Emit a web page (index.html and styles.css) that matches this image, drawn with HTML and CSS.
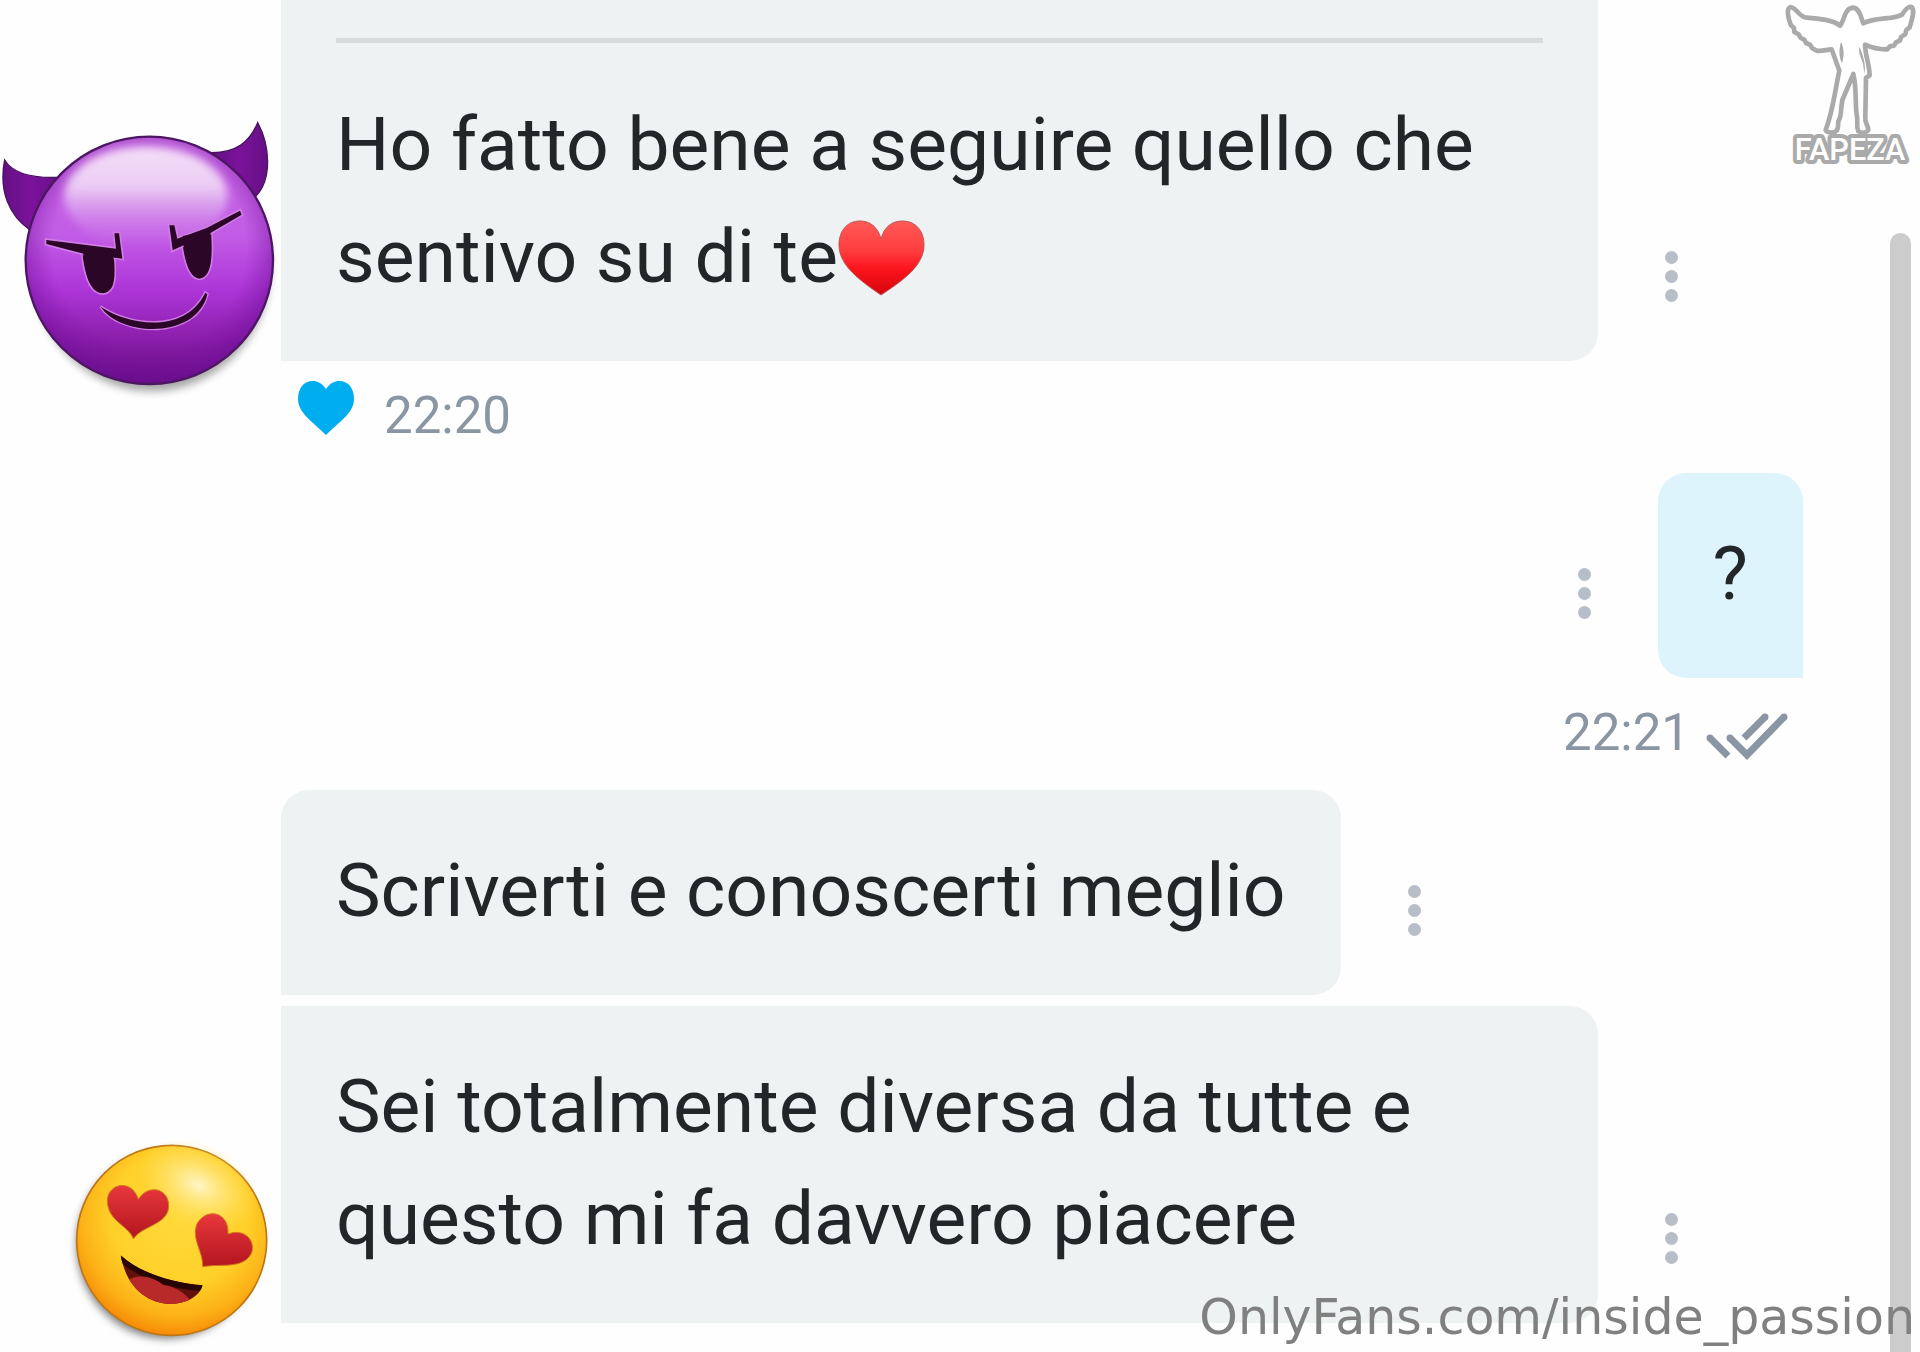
FILE: index.html
```html
<!DOCTYPE html>
<html lang="it">
<head>
    <meta charset="UTF-8">
    <meta name="viewport" content="width=device-width, initial-scale=1.0">
    <title>Chat</title>
    <link rel="stylesheet" href="styles.css">
</head>
<body>
    <main class="chat">
        <section class="group">
            <div class="avatar">
                <svg class="devil" viewBox="0 0 870 870" aria-label="Diavoletto">
                    <defs>
                        <linearGradient id="purple" x1="0" y1="0" x2="0" y2="1">
                            <stop offset="0" stop-color="#c468e0"/>
                            <stop offset="0.4" stop-color="#c25ce6"/>
                            <stop offset="0.62" stop-color="#ad35d8"/>
                            <stop offset="0.82" stop-color="#8b1eaa"/>
                            <stop offset="1" stop-color="#650c80"/>
                        </linearGradient>
                        <radialGradient id="purple-edge" cx="0.5" cy="0.45" r="0.56">
                            <stop offset="0.7" stop-color="#7d16a4" stop-opacity="0"/>
                            <stop offset="1" stop-color="#6c0c94" stop-opacity="0.7"/>
                        </radialGradient>
                        <linearGradient id="purple-shine" x1="0" y1="0" x2="0" y2="1">
                            <stop offset="0" stop-color="#f4e0f8"/>
                            <stop offset="0.4" stop-color="#f0d8f6" stop-opacity="0.9"/>
                            <stop offset="1" stop-color="#d68bed" stop-opacity="0"/>
                        </linearGradient>
                        <linearGradient id="horn" x1="0" y1="0" x2="1" y2="0">
                            <stop offset="0" stop-color="#641083"/>
                            <stop offset="0.5" stop-color="#7c129c"/>
                            <stop offset="1" stop-color="#641083"/>
                        </linearGradient>
                        <filter id="soft" x="-20%" y="-20%" width="140%" height="140%">
                            <feGaussianBlur stdDeviation="12"/>
                        </filter>
                    </defs>
                    <ellipse cx="455" cy="474" rx="355" ry="370" fill="#000" opacity="0.35" filter="url(#soft)"/>
                    <path d="M14 150C40 195 105 205 180 202L88 358C30 318-5 245 14 150Z" fill="url(#horn)" stroke="#4a1260" stroke-width="4"/>
                    <path d="M773 38C748 98 708 128 635 128L768 258C815 210 812 110 773 38Z" fill="url(#horn)" stroke="#4a1260" stroke-width="4"/>
                    <circle cx="448" cy="451" r="371" fill="url(#purple)"/>
                    <circle cx="448" cy="451" r="371" fill="url(#purple-edge)"/>
                    <ellipse cx="438" cy="260" rx="245" ry="150" fill="url(#purple-shine)" filter="url(#soft)"/>
                    <circle cx="448" cy="451" r="371" fill="none" stroke="#4d1663" stroke-width="7"/>
                    <g fill="#2b0626" stroke="#d07de6" stroke-width="10" paint-order="stroke">
                        <path d="M247 425C253 490 270 550 309 550C348 546 346 495 341 432Z"/>
                        <path d="M545 385C553 445 565 505 599 506C636 500 638 440 633 364Z"/>
                        <path d="M139 390L348 416L343 370L357 370L367 446L245 430L139 402Z"/>
                        <path d="M508 346L523 346L532 386L620 354L720 302L725 314L630 370L518 421Z"/>
                        <path d="M302 590C375 640 550 680 616 548L622 553C590 690 360 680 302 590Z" stroke-width="8"/>
                    </g>
                    <path d="M249 420C253 490 270 548 309 548C346 546 345 495 339 425ZM548 378C553 445 565 503 599 504C634 500 636 440 631 362Z" fill="#2b0626"/>
                </svg>
            </div>
            <div class="thread">
                <div class="row">
                    <div class="bubble bubble-reply">
                        <hr class="rule">
                        <p class="text">Ho fatto bene a seguire quello che sentivo su di te<svg class="heart" viewBox="0 0 87 76" aria-label="cuore">
                            <defs>
                                <linearGradient id="red" x1="0" y1="0" x2="0" y2="1">
                                    <stop offset="0" stop-color="#ff5a56"/>
                                    <stop offset="0.4" stop-color="#ff3d3f"/>
                                    <stop offset="0.65" stop-color="#fb141c"/>
                                    <stop offset="1" stop-color="#d5060c"/>
                                </linearGradient>
                            </defs>
                            <path d="M43 19C46 7 54 1 64 1C78 1 86 11 86 25C86 46 64 61 43 75C23 61 1 46 1 25C1 11 9 1 22 1C32 1 40 7 43 19Z" fill="url(#red)" stroke="#b9585b" stroke-width="1"/>
                        </svg></p>
                    </div>
                    <button class="more" aria-label="Altro"><i></i><i></i><i></i></button>
                </div>
                <div class="meta">
                    <svg class="like" viewBox="0 0 56 54" aria-label="Mi piace"><path d="M28 8C32 2 37 0 41 0C51 0 56 8 56 18C56 32 42 40 28 54C14 40 0 32 0 18C0 8 5 0 15 0C19 0 24 2 28 8Z" fill="#00aeef"/></svg>
                    <time>22:20</time>
                </div>
            </div>
        </section>

        <section class="group">
            <div class="thread mine">
                <div class="row">
                    <button class="more" aria-label="Altro"><i></i><i></i><i></i></button>
                    <div class="bubble bubble-mine"><p class="text">?</p></div>
                </div>
                <div class="meta">
                    <time>22:21</time>
                    <svg class="ticks" viewBox="0 0 82 48" aria-label="Letto"><path d="M4 25L22 43M59 4L38 25M24 25L41 42L78 4" fill="none" stroke="#8a96a3" stroke-width="7"/><g fill="#8a96a3"><circle cx="4" cy="25" r="3.5"/><circle cx="24" cy="25" r="3.5"/><circle cx="59" cy="4" r="3.5"/><circle cx="78" cy="4" r="3.5"/></g></svg>
                </div>
            </div>
        </section>

        <section class="group">
            <div class="avatar avatar-end">
                <svg class="love" viewBox="0 0 690 666" aria-label="Occhi a cuore">
                    <defs>
                        <radialGradient id="yellow" cx="0.54" cy="0.38" r="0.65">
                            <stop offset="0" stop-color="#ffd93b"/>
                            <stop offset="0.55" stop-color="#ffd029"/>
                            <stop offset="0.8" stop-color="#fcb116"/>
                            <stop offset="1" stop-color="#f58204"/>
                        </radialGradient>
                        <radialGradient id="yellow-shine">
                            <stop offset="0" stop-color="#fff6c8"/>
                            <stop offset="1" stop-color="#ffe568" stop-opacity="0"/>
                        </radialGradient>
                        <linearGradient id="eye" x1="0" y1="0" x2="0" y2="1">
                            <stop offset="0" stop-color="#e8383d"/>
                            <stop offset="1" stop-color="#b3151f"/>
                        </linearGradient>
                        <clipPath id="mouth">
                            <path d="M182 376C240 430 340 458 428 466C405 545 215 560 182 376Z"/>
                        </clipPath>
                    </defs>
                    <ellipse cx="320" cy="346" rx="270" ry="280" fill="#000" opacity="0.5" filter="url(#soft)"/>
                    <circle cx="335" cy="331" r="285" fill="url(#yellow)" stroke="#bd7614" stroke-width="5"/>
                    <ellipse cx="415" cy="165" rx="190" ry="125" fill="url(#yellow-shine)" transform="rotate(25 415 165)"/>
                    <path d="M220 326C205 285 142 275 142 210C145 160 215 145 235 208C265 160 328 175 326 230C322 285 250 285 220 326Z" fill="url(#eye)" stroke="#d07818" stroke-width="3"/>
                    <path d="M428 410C430 365 392 325 412 280C440 232 508 245 504 312C548 295 585 325 576 365C555 420 480 400 428 410Z" fill="url(#eye)" stroke="#d07818" stroke-width="3"/>
                    <g clip-path="url(#mouth)">
                        <rect x="170" y="360" width="270" height="180" fill="#62100b"/>
                        <path d="M180 374C240 430 340 458 430 466L425 482C340 480 240 450 182 395Z" fill="#260503"/>
                        <path d="M195 455C240 425 285 445 310 465C350 470 375 490 400 520L300 550L200 520Z" fill="#b82a2a"/>
                    </g>
                </svg>
            </div>
            <div class="thread">
                <div class="row">
                    <div class="bubble bubble-first"><p class="text">Scriverti e conoscerti meglio</p></div>
                    <button class="more" aria-label="Altro"><i></i><i></i><i></i></button>
                </div>
                <div class="row">
                    <div class="bubble"><p class="text">Sei totalmente diversa da tutte e questo mi fa davvero piacere</p></div>
                    <button class="more" aria-label="Altro"><i></i><i></i><i></i></button>
                </div>
            </div>
        </section>

        <div class="scrollbar"></div>

        <svg class="logo" viewBox="0 0 480 540" aria-label="Fapeza">
            <g fill="#fff" stroke="#aaa" stroke-width="14" stroke-linejoin="round">
                <path d="M240 77C220 60 180 56 135 52C115 46 107 22 92 21C78 25 84 55 93 76L102 84L103 96L116 103L122 114L133 119L138 129L150 134L156 144L170 152C188 155 200 148 215 148L238 212C225 270 220 330 197 390C202 400 222 400 231 391C238 375 231 368 238 357C245 345 242 325 247 300L280 222C290 260 285 310 290 345C296 365 287 378 295 394C305 400 318 400 325 390C325 375 313 368 316 350L318 234L329 226C328 190 316 170 315 134C335 143 355 149 382 148L390 139L402 137L408 127L420 121L424 110L436 103L439 90L449 82C455 60 465 35 456 22C445 16 435 30 427 43C405 60 345 50 310 70C304 60 302 25 279 23C252 25 255 60 240 77Z"/>
                <path d="M243 125C236 150 237 170 246 190C253 165 253 148 243 125ZM299 140C293 155 303 172 309 190L313 222C319 190 308 165 299 140Z" fill="#aaa" stroke="none"/>
            </g>
            <text class="logo-text" x="270" y="479" text-anchor="middle">FAPEZA</text>
        </svg>
        <a class="watermark" href="#">OnlyFans.com/inside_passion</a>
    </main>
</body>
</html>
```
FILE: styles.css
```css
* {
    box-sizing: border-box;
}
body {
    margin: 0;
    background-color: #fefefe;
    color: #222628;
    font-family: Roboto, "Liberation Sans", sans-serif;
}
.chat {
    position: relative;
    min-height: 100vh;
    padding-right: 117px;
    overflow: hidden;
}
.group {
    display: flex;
}
.avatar {
    flex: 0 0 281px;
    min-width: 0;
    height: 400px;
    padding-top: 110px;
}
.avatar-end {
    align-self: flex-end;
    height: 193px;
    padding: 0 0 0 60px;
}
.devil {
    display: block;
    width: 290px;
    height: 290px;
}
.love {
    display: block;
    width: 230px;
    height: 222px;
}
.thread {
    flex: 1;
    min-width: 0;
    display: flex;
    flex-direction: column;
}
.row {
    display: flex;
    align-items: flex-end;
    gap: 54px;
}
.row + .row {
    margin-top: 11px;
}
.bubble {
    max-width: 1317px;
    padding: 44px 55px 49px;
    background-color: #eef2f3;
    border-radius: 0 28px 28px 0;
}
.bubble-reply {
    padding-top: 38px;
    border-top-right-radius: 0;
}
.bubble-first {
    border-top-left-radius: 28px;
}
.bubble-mine {
    background-color: #def4fd;
    border-radius: 28px 28px 0 28px;
}
.rule {
    height: 5px;
    margin: 0 0 45px;
    border: 0;
    background-color: #d7dbdc;
}
.text {
    margin: 0;
    font-size: 75px;
    line-height: 112px;
}
.heart {
    width: 87px;
    height: 76px;
    vertical-align: -14px;
}
/* three dots menu */
.more {
    flex: none;
    display: flex;
    flex-direction: column;
    gap: 6px;
    margin-bottom: 59px;
    padding: 0 13px;
    border: 0;
    background: none;
}
.more i {
    width: 13px;
    height: 13px;
    border-radius: 50%;
    background-color: #b8bec7;
}
.meta {
    display: flex;
    align-items: flex-start;
    height: 112px;
    padding: 0 15px 0 17px;
    color: #8a96a3;
    font-size: 51px;
    line-height: 110px;
}
.like {
    width: 56px;
    height: 54px;
    margin: 20px 30px 0 0;
}
.ticks {
    width: 82px;
    height: 48px;
    margin: 35px 0 0 16px;
}
.mine {
    align-items: flex-end;
}
.scrollbar {
    position: absolute;
    top: 233px;
    right: 9px;
    bottom: 0;
    width: 21px;
    border-radius: 11px 11px 0 0;
    background-color: #ccc;
}
.logo {
    position: absolute;
    top: 0;
    right: 0;
    width: 160px;
    height: 180px;
}
.logo-text {
    fill: #fff;
    stroke: #aaa;
    stroke-width: 24px;
    stroke-linejoin: round;
    paint-order: stroke;
    font-size: 92px;
    font-weight: 500;
}
.watermark {
    position: absolute;
    right: 5px;
    bottom: 4px;
    color: #808080;
    font-family: "DejaVu Sans", sans-serif;
    font-size: 49px;
    line-height: 60px;
    text-decoration: none;
}
```
